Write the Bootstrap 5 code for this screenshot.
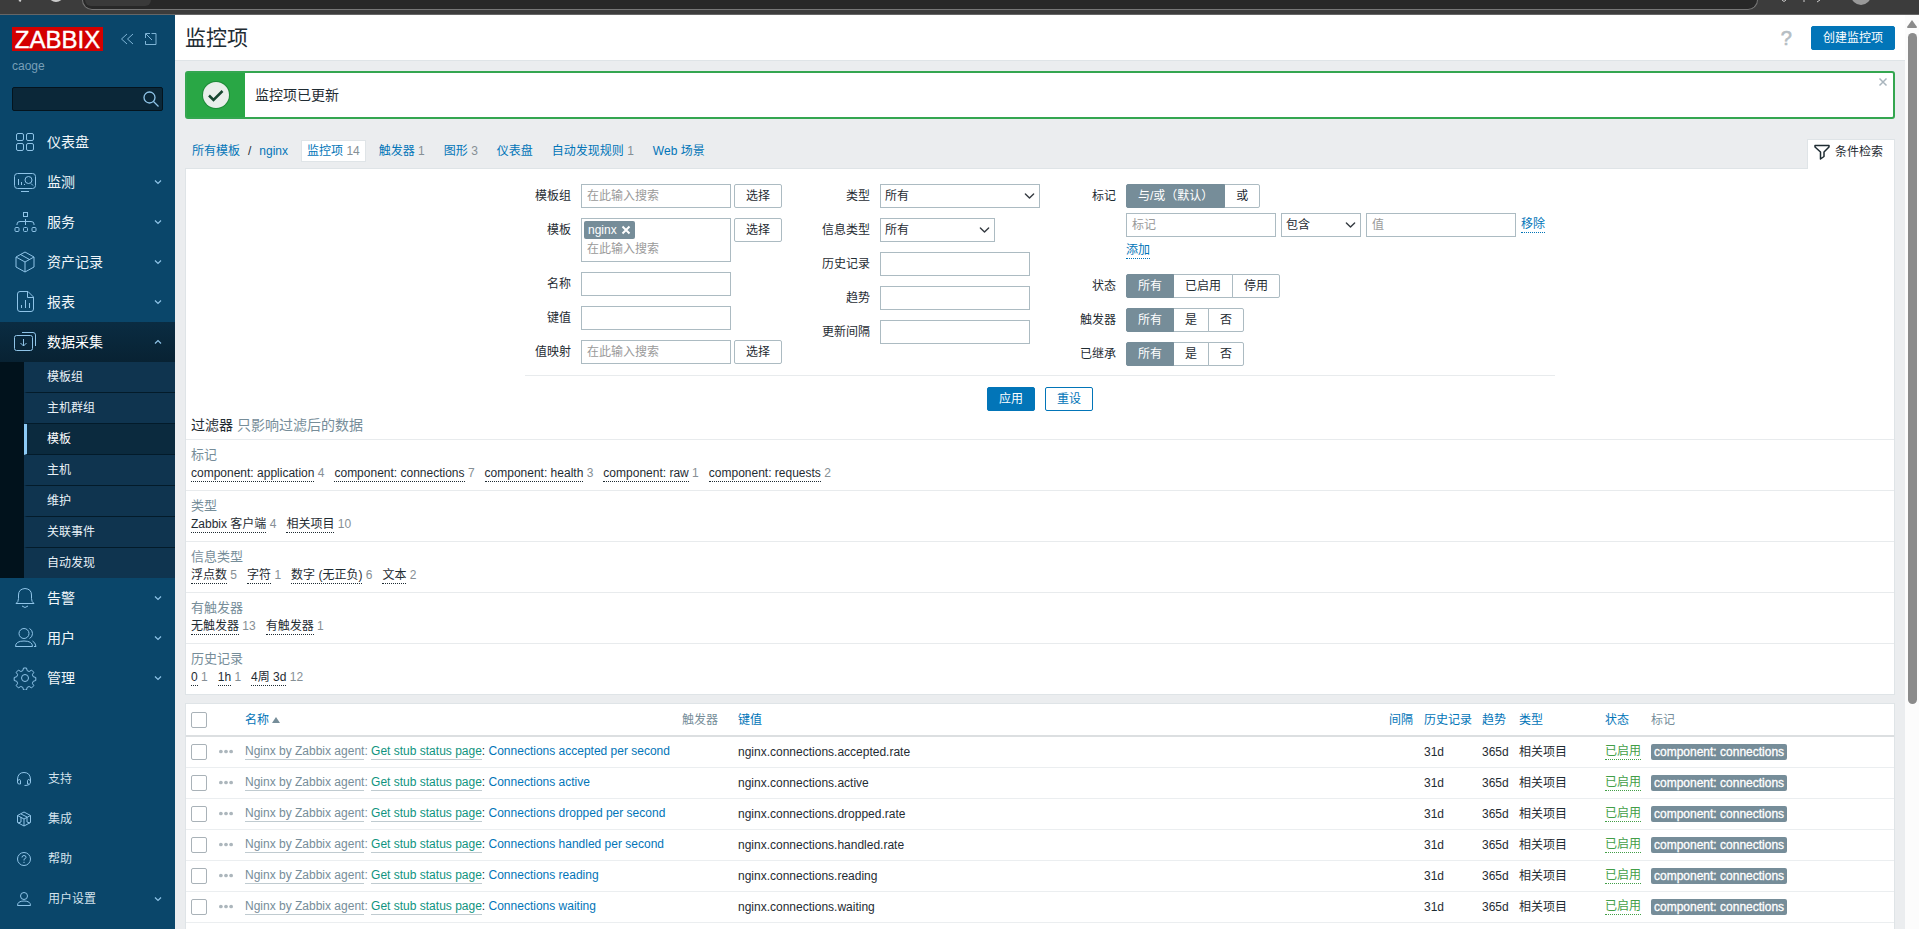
<!DOCTYPE html>
<html lang="zh-CN">
<head>
<meta charset="utf-8">
<meta name="viewport" content="width=device-width, initial-scale=1">
<title>监控项</title>
<link href="https://cdn.jsdelivr.net/npm/bootstrap@5.3.0/dist/css/bootstrap.min.css" rel="stylesheet">
<style>
:root{--zx-blue:#0275b8;--zx-grey:#768d99;--zx-line:#dfe4e7;--zx-text:#1f2c33}
body{font-family:"Liberation Sans","Noto Sans CJK SC",sans-serif;font-size:12px;line-height:16px;color:var(--zx-text);background:#ebedef}
a{text-decoration:none;color:var(--zx-blue)}
svg{fill:none;stroke:currentColor;flex:none}
/* browser edge */
.chrome-edge{height:15px;background:#3c3c3c;border-bottom:1px solid #666;overflow:hidden;color:#ccc}
.omnibox{height:10px;background:#282828;border:1px solid #777;border-top:0;border-radius:0 0 14px 14px;margin-left:4px}
.site-chip{width:66px;height:6px;background:#3a3a3a;border-radius:0 0 8px 8px;margin-left:2px}
/* sidebar */
.side{width:175px;background:#0a466a;color:#e6f0f6}
.side-top{padding:12px 12px 0}
.logo{background:#d40000;color:#fff;width:91px;height:24px;font-size:24px;line-height:26px;text-align:center;-webkit-text-stroke:.4px #fff}
.side-tool{color:#7fb4d6;background:none;border:0;padding:0;line-height:0}
.side-user{color:#789fb8;height:16px;margin:7px 12px 0}
.side-search{height:24px;background:#0b2738;border:1px solid #04141e;border-radius:2px;margin:13px 12px 11px;padding-right:2px}
.side-search input{background:none;border:0;color:#fff;outline:0;min-width:0}
.side-search svg,.menu-link svg{color:#8fc4e8}
.menu-link{height:40px;padding:0 13px 0 12px;color:#f0f6fa;font-size:14px;display:flex;align-items:center}
.menu-link .ico{width:26px;margin-right:9px;display:flex;justify-content:center}
.menu-link.open{background:linear-gradient(#0a2c42,#082233);color:#fff}
.sub{background:linear-gradient(90deg,#01121c 24px,#0f344f 24px);padding-left:24px}
.sub a{display:block;height:31px;line-height:31px;padding-left:20px;border-left:3px solid transparent;border-bottom:1px solid #031b2a;color:#e8f1f7}
.sub li:last-child a{border-bottom:0;height:30px}
.sub a.current{background:#0b2a3e;border-left-color:#8ccaf5;color:#fff}
.foot{padding-bottom:10px}
.foot .menu-link{font-size:12px;color:#d3e2ec}
.foot .ico{width:24px;margin-right:12px}
/* page */
.page-head{height:46px;background:#fff;border-bottom:1px solid var(--zx-line);padding:0 10px}
.page-body{padding:10px 10px 0}
.page-head h1{font-size:21px;line-height:28px;font-weight:400}
.help{color:#b5bdc3;font-size:20px;line-height:24px;-webkit-text-stroke:.6px #b5bdc3;margin-right:19px}
.zbtn{font-size:12px;line-height:22px;padding:0 11px;border-radius:2px;border:1px solid #acbbc2;background:#fff;color:var(--zx-text);white-space:nowrap}
.zbtn.main{background:var(--zx-blue);border-color:var(--zx-blue);color:#fff}
.zbtn.alt{border-color:var(--zx-blue);color:var(--zx-blue)}
.btn-check:checked+.zbtn{background:var(--zx-grey);border-color:var(--zx-grey);color:#fff}
.msg{height:48px;border:2px solid #34a650;border-radius:3px;background:#fff;font-size:14px}
.msg-icon{width:58px;background:#29a745;align-self:stretch}
.msg-close{background:none;border:0;padding:3px 5px;color:#a9b5bd;line-height:0;align-self:flex-start}
.tabs{height:29px;margin-top:20px}
.tabs nav{gap:7px;padding:1px 0 0 1px}
.tabs nav a,.crumbs{padding:0 6px;line-height:23px;white-space:nowrap}
.tabs nav .crumbs a{padding:0}
.tabs nav a.on{background:#fff;border:1px solid var(--zx-line);padding:0 5px;line-height:21px;height:22px}
.n{color:#868f95}
.filter-tab{height:30px;margin-bottom:-1px;background:#fff;border:1px solid var(--zx-line);border-bottom:0;padding:0 11px 6px 6px;gap:5px;z-index:1;color:var(--zx-text)}
.panel{background:#fff;border:1px solid var(--zx-line)}
.list-panel{margin-top:8px;border-bottom:0}
.fcols{gap:40px;padding:15px 10px 9px}
.pair{gap:3px}
.fgrid{display:grid;grid-template-columns:max-content max-content;gap:10px;align-content:start}
.fgrid>label,.fgrid>.lbl{text-align:right;line-height:24px}
.fgrid>.btn-group{justify-self:start}
.tagbox{height:80px}
.tagrow{gap:5px;margin:5px 0}
.zin{height:24px;width:150px;border:1px solid #acbbc2;border-radius:0;padding:0 5px;font-size:12px;line-height:22px;background-color:#fff;color:var(--zx-text)}
.zin::placeholder,.multi input::placeholder{color:#9a9a9a;opacity:1}
select.zin{padding:0 20px 0 4px;background-position:right 4px center;background-size:11px 12px}
.w160{width:160px}.w115{width:115px}.w80{width:80px}
.multi{width:150px;height:44px;border:1px solid #acbbc2;padding:2px}
.multi input{border:0;width:100%;padding:0 3px;outline:0;height:20px;display:block}
.chip{background:var(--zx-grey);color:#fff;border-radius:2px;height:18px;line-height:18px;padding:0 4px}
.chip button{border:0;background:none;color:#fff;padding:0;line-height:0}
.dot{border-bottom:1px dotted currentColor;color:inherit;line-height:15px;display:inline-block}
.blue{color:var(--zx-blue)}
.fbtns{border-top:1px solid #e8ebed;padding:11px 0 0;gap:10px}
.fhead{font-size:14px;line-height:20px;padding:4px 5px}
.muted{color:var(--zx-grey)}
.fsec{border-top:1px solid #e8ebed;height:51px;padding:6px 5px 0}
.fsec h2{font-size:13px;line-height:18px;margin:0;font-weight:400;color:var(--zx-grey)}
.fsec div{gap:10px;line-height:18px}
.items{table-layout:fixed;width:100%;margin:0;color:var(--zx-text)}
.items th,.items td{padding:0 5px;height:31px;border-bottom:1px solid #ebeef0;white-space:nowrap}
.items th{font-weight:400;color:var(--zx-grey);border-bottom:2px solid #dcdfe1;height:32px}
.items input{appearance:none;width:16px;height:16px;border:1px solid #a9b2b8;border-radius:2px;display:block;margin:0;background:#fff}
.dots{border:0;background:none;padding:0 2px;line-height:0;color:#acb6bc;display:block}
.ul{border-bottom:1px solid #c0cbd0;display:inline-block;line-height:15px}
.g1{color:var(--zx-grey)}.g2{color:#0f9480}.on-st{color:#429e47}
.tag{background:var(--zx-grey);color:#fff;border-radius:2px;height:16px;line-height:16px;padding:0 3px;display:inline-block;vertical-align:middle;-webkit-text-stroke:.3px #fff}
.sbar{width:14px;background:#fcfcfc}
.sbar svg{display:block;margin:5px auto 0}
.sbar i{display:block;width:9px;height:73.4%;border-radius:5px;background:#8b8b8b;margin:5px auto 0}
</style>
</head>
<body class="vh-100 d-flex flex-column overflow-hidden">
<svg class="d-none">
<symbol id="down" viewBox="0 0 8 8"><path d="M1 2.500l3 3 3-3" stroke-width="1.200"/></symbol>
<symbol id="up" viewBox="0 0 8 8"><path d="M1 5.500l3-3 3 3" stroke-width="1.200"/></symbol>
<symbol id="more" viewBox="0 0 15 5"><g fill="currentColor" stroke="none"><circle cx="2" cy="2.500" r="2"/><circle cx="7.500" cy="2.500" r="2"/><circle cx="13" cy="2.500" r="2"/></g></symbol>
</svg>
<div class="chrome-edge d-flex align-items-start flex-shrink-0">
 <svg width="78" height="6"><path d="M19 0l2 1M51 -1q5 4 10 0" stroke-width="2"/></svg>
 <div class="omnibox flex-grow-1"><div class="site-chip"></div></div>
 <svg width="161" height="8"><path d="M24 0q2 3 4 0M62 0l-3 2M46 0v2"/><circle cx="103" cy="-5" r="10" fill="#999" stroke="none"/></svg>
</div>
<div class="d-flex flex-grow-1 overflow-hidden">
<aside class="side d-flex flex-column flex-shrink-0">
 <div class="side-top d-flex align-items-center">
  <div class="logo">ZABBIX</div>
  <button class="side-tool ms-auto me-2" aria-label="收起"><svg width="16" height="14" viewBox="0 0 16 14"><path d="M8 2L2.500 7 8 12M14 2L8.500 7 14 12"/></svg></button>
  <button class="side-tool me-1" aria-label="隐藏"><svg width="16" height="14" viewBox="0 0 16 14"><path d="M8.500 1.500H13v11H2.500V9M2.500 6V1.500H7M3 2l6 6"/></svg></button>
 </div>
 <div class="side-user">caoge</div>
 <div class="side-search d-flex align-items-center">
  <input type="text" class="flex-grow-1" aria-label="搜索">
  <svg width="18" height="18" viewBox="0 0 18 18" stroke-width="1.300"><circle cx="7.500" cy="7.500" r="5.500"/><path d="M11.500 11.500l5 5"/></svg>
 </div>
 <a class="menu-link" href="#"><span class="ico"><svg width="20" height="20" viewBox="0 0 20 20"><rect x="1.500" y="1.500" width="7" height="7" rx="1.500"/><rect x="11.500" y="1.500" width="7" height="7" rx="1.500"/><rect x="1.500" y="11.500" width="7" height="7" rx="1.500"/><rect x="11.500" y="11.500" width="7" height="7" rx="1.500"/></svg></span>仪表盘</a>
 <a class="menu-link" href="#"><span class="ico"><svg width="24" height="22" viewBox="0 0 24 22"><rect x="1.500" y="2.500" width="21" height="15" rx="3"/><path d="M8 20.500h8M5.500 8v6M8.500 11v3M11.500 13v1M18 12.500l2 2"/><circle cx="15.500" cy="9" r="3.500"/></svg></span>监测<svg class="ms-auto" width="8" height="8"><use href="#down"/></svg></a>
 <a class="menu-link" href="#"><span class="ico"><svg width="24" height="24" viewBox="0 0 24 24"><rect x="10.500" y="2.500" width="4" height="4"/><rect x="2" y="17.500" width="4" height="4" rx="1"/><rect x="10.500" y="17.500" width="4" height="4" rx="1"/><rect x="19" y="17.500" width="4" height="4" rx="1"/><path d="M12.500 9v6M4 15v-1q0-2.500 3-2.500h11q3 0 3 2.500v1"/></svg></span>服务<svg class="ms-auto" width="8" height="8"><use href="#down"/></svg></a>
 <a class="menu-link" href="#"><span class="ico"><svg width="22" height="24" viewBox="0 0 22 24"><path d="M11 2l9 5v10l-9 5-9-5V7zM2 7l9 5 9-5M11 12v10M6.500 4.500l9 5"/></svg></span>资产记录<svg class="ms-auto" width="8" height="8"><use href="#down"/></svg></a>
 <a class="menu-link" href="#"><span class="ico"><svg width="20" height="24" viewBox="0 0 20 24"><path d="M13 1.500H5q-2.500 0-2.500 2.500v15q0 2.500 2.500 2.500h11q2.500 0 2.500-2.500V7zM12.500 2v5.500H18M6.500 15v3M10.500 10v8M14.500 13v5"/></svg></span>报表<svg class="ms-auto" width="8" height="8"><use href="#down"/></svg></a>
 <a class="menu-link open" href="#"><span class="ico"><svg width="24" height="22" viewBox="0 0 24 22"><rect x="1.500" y="4.500" width="18" height="15" rx="2"/><path d="M9 1.500h11q2.500 0 2.500 2.500v11M10.500 8v7M7.500 12l3 3 3-3"/></svg></span>数据采集<svg class="ms-auto" width="8" height="8"><use href="#up"/></svg></a>
 <ul class="sub list-unstyled mb-0">
  <li><a href="#">模板组</a></li><li><a href="#">主机群组</a></li><li><a href="#" class="current">模板</a></li><li><a href="#">主机</a></li><li><a href="#">维护</a></li><li><a href="#">关联事件</a></li><li><a href="#">自动发现</a></li>
 </ul>
 <a class="menu-link" href="#"><span class="ico"><svg width="22" height="24" viewBox="0 0 22 24"><path d="M2 17.500q2.500-1.500 2.500-5V9q0-6 6.500-6.500Q17.500 3 17.500 9v3.500q0 3.500 2.500 5zM8 20q3 3 6 0"/></svg></span>告警<svg class="ms-auto" width="8" height="8"><use href="#down"/></svg></a>
 <a class="menu-link" href="#"><span class="ico"><svg width="24" height="24" viewBox="0 0 24 24"><circle cx="11" cy="7.500" r="5"/><path d="M2.500 20.500q0-5.500 8.500-5.500t8.500 5.500zM16.500 2.500q3 1.500 3 5t-3 5M19.500 15q3 1.500 3.500 5.500h-2"/></svg></span>用户<svg class="ms-auto" width="8" height="8"><use href="#down"/></svg></a>
 <a class="menu-link" href="#"><span class="ico"><svg width="24" height="24" viewBox="0 0 24 24"><circle cx="12" cy="12" r="3.500"/><path stroke-linejoin="round" d="M10.500 2h3l.7 2.700 2 .8 2.400-1.400 2.200 2.200-1.400 2.400.8 2 2.600.8v3l-2.600.8-.8 2 1.400 2.400-2.200 2.200-2.400-1.400-2 .8-.7 2.700h-3l-.7-2.700-2-.8-2.400 1.400-2.200-2.200 1.400-2.400-.8-2L1.200 14.500v-3l2.600-.8.8-2-1.400-2.400 2.200-2.200 2.400 1.400 2-.8z"/></svg></span>管理<svg class="ms-auto" width="8" height="8"><use href="#down"/></svg></a>
 <div class="foot mt-auto">
  <a class="menu-link" href="#"><span class="ico"><svg width="16" height="16" viewBox="0 0 16 16"><path d="M3.500 13H3q-1.500 0-1.500-2V8Q2 1.500 8 1.500T14.500 8v3q0 3.500-6 3.500M1.500 9.500q3-2 3 0V13h-1M14.500 9.500q-3-2-3 0V13h1.500"/></svg></span>支持</a>
  <a class="menu-link" href="#"><span class="ico"><svg width="16" height="16" viewBox="0 0 16 16"><path d="M8 1l6.500 3.500v7L8 15l-6.500-3.500v-7zM1.500 4.500L8 8l6.500-3.500M8 8v7M5 3l6 3M5 6v5l-3 1M11 6v5l3 1"/></svg></span>集成</a>
  <a class="menu-link" href="#"><span class="ico"><svg width="16" height="16" viewBox="0 0 16 16"><circle cx="8" cy="8" r="6.500"/><path d="M6 6.500Q6 4.500 8 4.500t2 1.800Q10 7.500 8 8.300v1.200M8 10.800v1.200"/></svg></span>帮助</a>
  <a class="menu-link" href="#"><span class="ico"><svg width="16" height="16" viewBox="0 0 16 16"><circle cx="8" cy="5" r="3.500"/><path d="M1.500 14.500q0-4.500 6.500-4.500t6.500 4.500z"/></svg></span>用户设置<svg class="ms-auto" width="8" height="8"><use href="#down"/></svg></a>
 </div>
</aside>
<main class="flex-grow-1 d-flex flex-column overflow-hidden">
 <header class="page-head d-flex align-items-center flex-shrink-0">
  <h1 class="mb-0 me-auto">监控项</h1>
  <a class="help" href="#">?</a>
  <button class="zbtn main">创建监控项</button>
 </header>
 <div class="page-body d-flex flex-column flex-grow-1">
  <div class="msg d-flex align-items-center flex-shrink-0">
   <div class="msg-icon d-flex align-items-center justify-content-center"><svg width="30" height="30" viewBox="0 0 30 30"><circle cx="15" cy="15" r="14" fill="#1d8a37" stroke="none"/><circle cx="15" cy="15" r="13" fill="#e9eeea" stroke="none"/><path d="M8 15.500l4.500 4.500 9-9" stroke="#17462f" stroke-width="2.500"/></svg></div>
   <span style="padding-left:10px">监控项已更新</span>
   <button class="msg-close ms-auto" aria-label="关闭"><svg width="10" height="12" viewBox="0 0 10 12" stroke-width="1.500"><path d="M1.500 2.500l7 7M8.500 2.500l-7 7"/></svg></button>
  </div>
  <div class="tabs d-flex align-items-start flex-shrink-0">
   <nav class="d-flex me-auto">
    <span class="crumbs"><a href="#">所有模板</a><span class="px-2">/</span><a href="#">nginx</a></span>
    <a class="on" href="#">监控项 <span class="n">14</span></a><a href="#">触发器 <span class="n">1</span></a><a href="#">图形 <span class="n">3</span></a><a href="#">仪表盘</a><a href="#">自动发现规则 <span class="n">1</span></a><a href="#">Web 场景</a>
   </nav>
   <a class="filter-tab d-flex align-items-center" href="#"><svg width="16" height="16" viewBox="0 0 16 16" stroke-width="1.500"><path stroke-linejoin="round" d="M1 1.500h14v1.500l-5 5v4.500L6.500 15V8L1 3z"/></svg>条件检索</a>
  </div>
  <section class="panel flex-shrink-0">
   <form class="d-table mx-auto">
    <div class="fcols d-flex">
     <div class="fgrid">
      <label for="tgroup">模板组</label><div class="pair d-flex"><input id="tgroup" class="zin" placeholder="在此输入搜索"><button type="button" class="zbtn">选择</button></div>
      <label for="tp">模板</label><div class="pair d-flex align-items-start"><div class="multi"><span class="chip d-inline-flex align-items-center">nginx<button type="button" aria-label="移除 nginx" class="ms-1"><svg width="10" height="10" viewBox="0 0 10 10" stroke-width="2"><path d="M1.500 1.500l7 7M8.500 1.500l-7 7"/></svg></button></span><input id="tp" placeholder="在此输入搜索"></div><button type="button" class="zbtn">选择</button></div>
      <label for="nm">名称</label><input id="nm" class="zin">
      <label for="ky">键值</label><input id="ky" class="zin">
      <label for="vm">值映射</label><div class="pair d-flex"><input id="vm" class="zin" placeholder="在此输入搜索"><button type="button" class="zbtn">选择</button></div>
     </div>
     <div class="fgrid">
      <label for="ty">类型</label><select id="ty" class="form-select zin w160"><option>所有</option></select>
      <label for="it">信息类型</label><select id="it" class="form-select zin w115"><option>所有</option></select>
      <label for="hs">历史记录</label><input id="hs" class="zin">
      <label for="tr">趋势</label><input id="tr" class="zin">
      <label for="delay">更新间隔</label><input id="delay" class="zin">
     </div>
     <div class="fgrid">
      <span class="lbl">标记</span>
      <div class="tagbox">
       <div class="btn-group"><input type="radio" class="btn-check" name="op" id="op1" checked><label class="btn zbtn" for="op1">与/或（默认）</label><input type="radio" class="btn-check" name="op" id="op2"><label class="btn zbtn" for="op2">或</label></div>
       <div class="tagrow d-flex align-items-center"><input class="zin" placeholder="标记" aria-label="标记"><select class="form-select zin w80" aria-label="运算符"><option>包含</option></select><input class="zin" placeholder="值" aria-label="值"><a href="#" class="dot blue">移除</a></div>
       <a href="#" class="dot blue">添加</a>
      </div>
      <span class="lbl">状态</span>
      <div class="btn-group"><input type="radio" class="btn-check" name="st" id="st1" checked><label class="btn zbtn" for="st1">所有</label><input type="radio" class="btn-check" name="st" id="st2"><label class="btn zbtn" for="st2">已启用</label><input type="radio" class="btn-check" name="st" id="st3"><label class="btn zbtn" for="st3">停用</label></div>
      <span class="lbl">触发器</span>
      <div class="btn-group"><input type="radio" class="btn-check" name="trig" id="t1" checked><label class="btn zbtn" for="t1">所有</label><input type="radio" class="btn-check" name="trig" id="t2"><label class="btn zbtn" for="t2">是</label><input type="radio" class="btn-check" name="trig" id="t3"><label class="btn zbtn" for="t3">否</label></div>
      <span class="lbl">已继承</span>
      <div class="btn-group"><input type="radio" class="btn-check" name="inh" id="i1" checked><label class="btn zbtn" for="i1">所有</label><input type="radio" class="btn-check" name="inh" id="i2"><label class="btn zbtn" for="i2">是</label><input type="radio" class="btn-check" name="inh" id="i3"><label class="btn zbtn" for="i3">否</label></div>
     </div>
    </div>
    <div class="fbtns d-flex justify-content-center"><button type="button" class="zbtn main">应用</button><button type="reset" class="zbtn alt">重设</button></div>
   </form>
   <div class="fhead">过滤器 <span class="muted">只影响过滤后的数据</span></div>
   <div class="fsec"><h2>标记</h2><div class="d-flex"><span><a href="#" class="dot">component: application</a> <span class="n">4</span></span><span><a href="#" class="dot">component: connections</a> <span class="n">7</span></span><span><a href="#" class="dot">component: health</a> <span class="n">3</span></span><span><a href="#" class="dot">component: raw</a> <span class="n">1</span></span><span><a href="#" class="dot">component: requests</a> <span class="n">2</span></span></div></div>
   <div class="fsec"><h2>类型</h2><div class="d-flex"><span><a href="#" class="dot">Zabbix 客户端</a> <span class="n">4</span></span><span><a href="#" class="dot">相关项目</a> <span class="n">10</span></span></div></div>
   <div class="fsec"><h2>信息类型</h2><div class="d-flex"><span><a href="#" class="dot">浮点数</a> <span class="n">5</span></span><span><a href="#" class="dot">字符</a> <span class="n">1</span></span><span><a href="#" class="dot">数字 (无正负)</a> <span class="n">6</span></span><span><a href="#" class="dot">文本</a> <span class="n">2</span></span></div></div>
   <div class="fsec"><h2>有触发器</h2><div class="d-flex"><span><a href="#" class="dot">无触发器</a> <span class="n">13</span></span><span><a href="#" class="dot">有触发器</a> <span class="n">1</span></span></div></div>
   <div class="fsec"><h2>历史记录</h2><div class="d-flex"><span><a href="#" class="dot">0</a> <span class="n">1</span></span><span><a href="#" class="dot">1h</a> <span class="n">1</span></span><span><a href="#" class="dot">4周 3d</a> <span class="n">12</span></span></div></div>
  </section>
  <section class="panel list-panel flex-grow-1">
   <table class="items">
    <colgroup><col style="width:26px"><col style="width:28px"><col style="width:437px"><col style="width:56px"><col><col style="width:35px"><col style="width:58px"><col style="width:37px"><col style="width:86px"><col style="width:46px"><col style="width:248px"></colgroup>
    <thead><tr><th><input type="checkbox" aria-label="全选"></th><th></th><th><a href="#">名称</a> <svg width="8" height="6" viewBox="0 0 8 6"><path d="M0 6l4-6 4 6z" fill="#768d99" stroke="none"/></svg></th><th>触发器</th><th><a href="#">键值</a></th><th><a href="#">间隔</a></th><th><a href="#">历史记录</a></th><th><a href="#">趋势</a></th><th><a href="#">类型</a></th><th><a href="#">状态</a></th><th>标记</th></tr></thead>
    <tbody>
    <tr><td><input type="checkbox" aria-label="选择"></td><td><button class="dots" aria-label="更多"><svg width="14" height="5"><use href="#more"/></svg></button></td><td><a class="ul g1" href="#">Nginx by Zabbix agent</a><span class="g1">:</span> <a class="ul g2" href="#">Get stub status page</a>: <a href="#">Connections accepted per second</a></td><td></td><td>nginx.connections.accepted.rate</td><td></td><td>31d</td><td>365d</td><td>相关项目</td><td><a href="#" class="dot on-st">已启用</a></td><td><span class="tag">component: connections</span></td></tr>
    <tr><td><input type="checkbox" aria-label="选择"></td><td><button class="dots" aria-label="更多"><svg width="14" height="5"><use href="#more"/></svg></button></td><td><a class="ul g1" href="#">Nginx by Zabbix agent</a><span class="g1">:</span> <a class="ul g2" href="#">Get stub status page</a>: <a href="#">Connections active</a></td><td></td><td>nginx.connections.active</td><td></td><td>31d</td><td>365d</td><td>相关项目</td><td><a href="#" class="dot on-st">已启用</a></td><td><span class="tag">component: connections</span></td></tr>
    <tr><td><input type="checkbox" aria-label="选择"></td><td><button class="dots" aria-label="更多"><svg width="14" height="5"><use href="#more"/></svg></button></td><td><a class="ul g1" href="#">Nginx by Zabbix agent</a><span class="g1">:</span> <a class="ul g2" href="#">Get stub status page</a>: <a href="#">Connections dropped per second</a></td><td></td><td>nginx.connections.dropped.rate</td><td></td><td>31d</td><td>365d</td><td>相关项目</td><td><a href="#" class="dot on-st">已启用</a></td><td><span class="tag">component: connections</span></td></tr>
    <tr><td><input type="checkbox" aria-label="选择"></td><td><button class="dots" aria-label="更多"><svg width="14" height="5"><use href="#more"/></svg></button></td><td><a class="ul g1" href="#">Nginx by Zabbix agent</a><span class="g1">:</span> <a class="ul g2" href="#">Get stub status page</a>: <a href="#">Connections handled per second</a></td><td></td><td>nginx.connections.handled.rate</td><td></td><td>31d</td><td>365d</td><td>相关项目</td><td><a href="#" class="dot on-st">已启用</a></td><td><span class="tag">component: connections</span></td></tr>
    <tr><td><input type="checkbox" aria-label="选择"></td><td><button class="dots" aria-label="更多"><svg width="14" height="5"><use href="#more"/></svg></button></td><td><a class="ul g1" href="#">Nginx by Zabbix agent</a><span class="g1">:</span> <a class="ul g2" href="#">Get stub status page</a>: <a href="#">Connections reading</a></td><td></td><td>nginx.connections.reading</td><td></td><td>31d</td><td>365d</td><td>相关项目</td><td><a href="#" class="dot on-st">已启用</a></td><td><span class="tag">component: connections</span></td></tr>
    <tr><td><input type="checkbox" aria-label="选择"></td><td><button class="dots" aria-label="更多"><svg width="14" height="5"><use href="#more"/></svg></button></td><td><a class="ul g1" href="#">Nginx by Zabbix agent</a><span class="g1">:</span> <a class="ul g2" href="#">Get stub status page</a>: <a href="#">Connections waiting</a></td><td></td><td>nginx.connections.waiting</td><td></td><td>31d</td><td>365d</td><td>相关项目</td><td><a href="#" class="dot on-st">已启用</a></td><td><span class="tag">component: connections</span></td></tr>
    </tbody>
   </table>
  </section>
 </div>
</main>
<div class="sbar flex-shrink-0"><svg width="10" height="8" viewBox="0 0 10 8"><path d="M5 0l5 7q0 1-1 1H1Q0 8 0 7z" fill="#8b8b8b" stroke="none"/></svg><i></i></div>
</div>
<script src="https://cdn.jsdelivr.net/npm/bootstrap@5.3.0/dist/js/bootstrap.bundle.min.js"></script>
</body>
</html>
